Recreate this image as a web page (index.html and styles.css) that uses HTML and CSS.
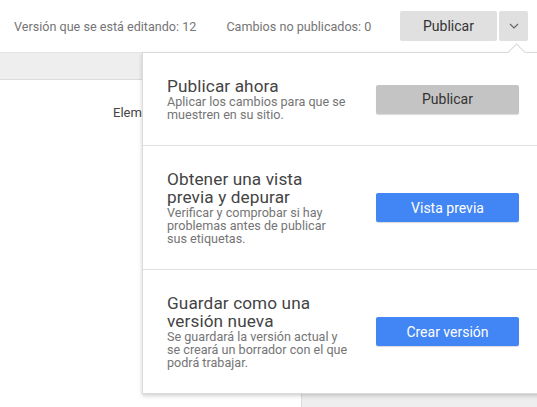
FILE: index.html
```html
<!DOCTYPE html>
<html lang="es">
<head>
    <meta charset="UTF-8">
    <meta name="viewport" content="width=device-width, initial-scale=1.0">
    <title>Publicar contenedor</title>
    <link rel="stylesheet" href="styles.css">
</head>
<body>
    <header class="top-bar">
        <span class="status">Versión que se está editando: 12</span>
        <span class="status status-changes">Cambios no publicados: 0</span>
        <div class="publish-group">
            <button class="btn-top btn-publish">Publicar</button>
            <button class="btn-top btn-menu">
                <svg width="10" height="6" viewBox="0 0 10 6">
                    <polyline points="1,1 5,5 9,1" fill="none" stroke="#666" stroke-width="1.2"/>
                </svg>
            </button>
        </div>
    </header>

    <div class="toolbar"></div>

    <main class="workspace">
        <section class="list-pane">
            <div class="list-head">Elementos</div>
        </section>
        <section class="side-pane"></section>
    </main>

    <div class="publish-menu">
        <span class="menu-arrow"></span>

        <div class="menu-row">
            <div class="menu-text">
                <h3>Publicar ahora</h3>
                <p>Aplicar los cambios para que se muestren en su sitio.</p>
            </div>
            <button class="btn-action btn-gray">Publicar</button>
        </div>

        <div class="menu-row">
            <div class="menu-text">
                <h3>Obtener una vista previa y depurar</h3>
                <p>Verificar y comprobar si hay problemas antes de publicar sus etiquetas.</p>
            </div>
            <button class="btn-action btn-blue">Vista previa</button>
        </div>

        <div class="menu-row">
            <div class="menu-text">
                <h3>Guardar como una versión nueva</h3>
                <p>Se guardará la versión actual y se creará un borrador con el que podrá trabajar.</p>
            </div>
            <button class="btn-action btn-blue">Crear versión</button>
        </div>
    </div>
</body>
</html>
```

FILE: styles.css
```css
body {
    margin: 0;
    padding: 0;
    font-family: Roboto, "Noto Sans", sans-serif;
    background: #fff;
    height: 407px;
    overflow: hidden;
    position: relative;
    display: flex;
    flex-direction: column;
}

.top-bar {
    height: 52px;
    display: flex;
    align-items: center;
    padding: 0 9px 0 14px;
    border-bottom: 1px solid #e5e5e5;
    flex-shrink: 0;
}

.status {
    font-size: 12.6px;
    color: #757575;
}

.status-changes {
    margin-left: 30px;
}

.publish-group {
    margin-left: auto;
    display: flex;
    gap: 2px;
}

.btn-top {
    height: 30px;
    border: none;
    border-radius: 2px;
    background: #e0e0e0;
    color: #333;
    font-family: inherit;
    font-size: 14px;
    padding: 0;
    cursor: pointer;
}

.btn-publish {
    width: 97px;
}

.btn-menu {
    width: 29px;
    display: flex;
    align-items: center;
    justify-content: center;
}

.toolbar {
    height: 26px;
    background: #eeeeee;
    border-bottom: 1px solid #dcdcdc;
    flex-shrink: 0;
}

.workspace {
    flex: 1;
    display: flex;
}

.list-pane {
    width: 301px;
}

.list-head {
    padding: 25px 0 0 113px;
    font-size: 13px;
    color: #444;
}

.side-pane {
    flex: 1;
    background: #eeeeee;
    border-left: 1px solid #dcdcdc;
}

/* dropdown under the publish button */
.publish-menu {
    position: absolute;
    top: 52px;
    left: 142px;
    width: 400px;
    background: #fff;
    border: 1px solid #dadada;
    box-shadow: 0 2px 4px rgba(0, 0, 0, 0.18);
}

.menu-arrow {
    position: absolute;
    top: -7px;
    left: 367px;
    width: 12px;
    height: 12px;
    background: #fff;
    border-top: 1px solid #dadada;
    border-left: 1px solid #dadada;
    transform: rotate(45deg);
}

.menu-row {
    display: flex;
    align-items: center;
    gap: 28px;
    padding: 24px;
    border-bottom: 1px solid #e0e0e0;
}

.menu-row:last-child {
    border-bottom: none;
}

.menu-text {
    width: 181px;
}

.menu-text h3 {
    margin: 0;
    font-size: 17.2px;
    font-weight: 400;
    letter-spacing: 0.1px;
    line-height: 18px;
    color: #444;
}

.menu-text p {
    margin: 0;
    font-size: 12.6px;
    line-height: 13px;
    color: #757575;
}

.btn-action {
    width: 143px;
    height: 29px;
    border: none;
    border-radius: 2px;
    font-family: inherit;
    font-size: 14px;
    cursor: pointer;
    box-shadow: 0 1px 1px rgba(0, 0, 0, 0.15);
}

.btn-gray {
    background: #c4c4c4;
    color: #333;
}

.btn-blue {
    background: #4285f4;
    color: #fff;
}
```
